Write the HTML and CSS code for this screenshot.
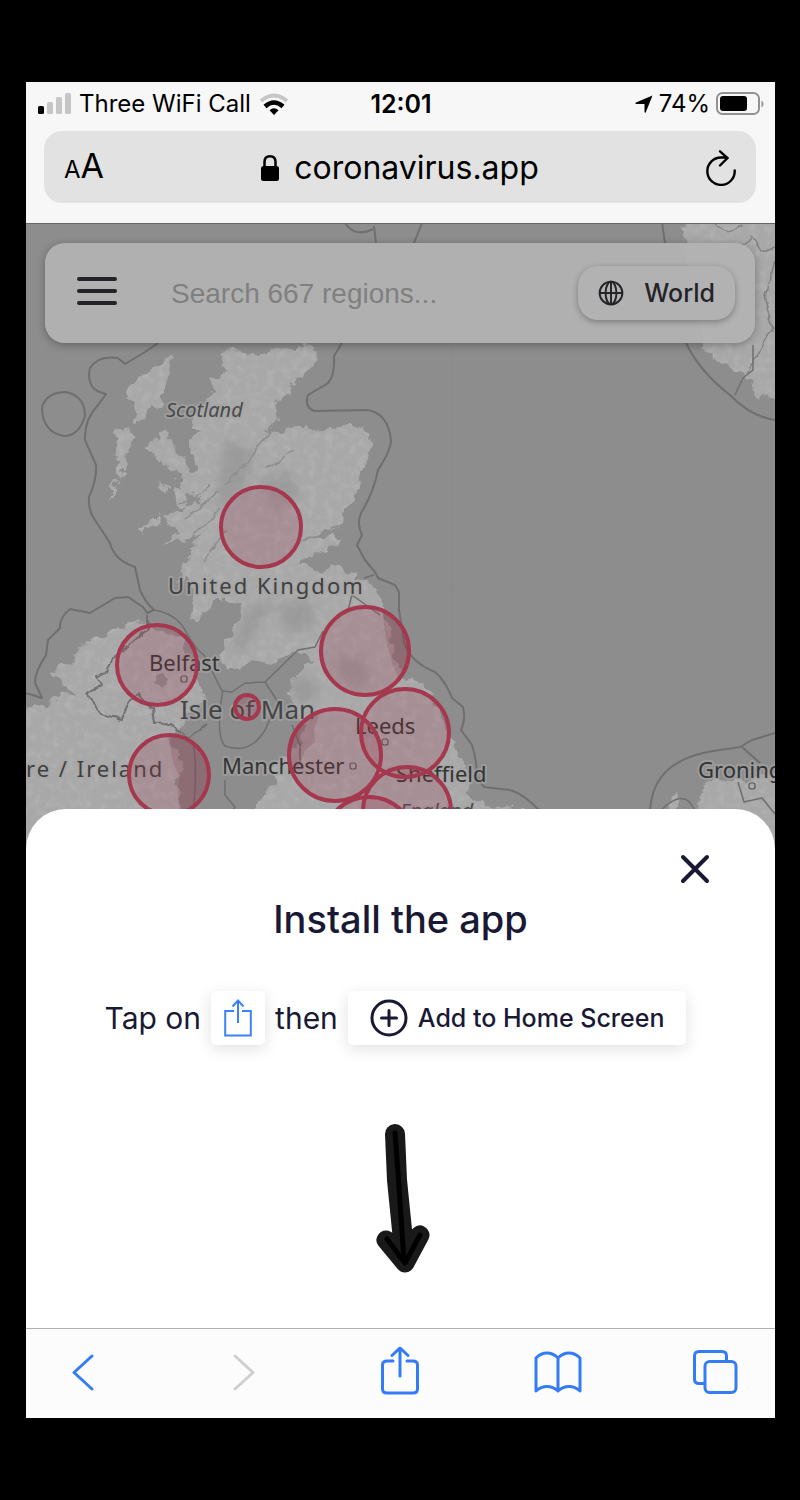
FILE: index.html
```html
<!DOCTYPE html>
<html lang="en">
<head>
<meta charset="utf-8">
<meta name="viewport" content="width=device-width, initial-scale=1">
<title>Install the app</title>
<link rel="stylesheet" href="styles.css">
</head>
<body>
<div class="phone">
  <header class="chrome">
    <div class="status">
      <div class="status-left">
        <svg class="signal" viewBox="0 0 33 21" aria-hidden="true">
          <rect x="0" y="13" width="6" height="8" rx="1.5"/>
          <g fill="#c6c6c6"><rect x="9" y="9" width="6" height="12" rx="1.5"/><rect x="18" y="4" width="6" height="17" rx="1.5"/><rect x="27" y="0" width="6" height="21" rx="1.5"/></g>
        </svg>
        <span>Three WiFi Call</span>
        <svg class="wifi" viewBox="0 0 30 22" aria-hidden="true">
          <path d="M2 8Q15-3 28 8" fill="none" stroke="#c6c6c6" stroke-width="4"/>
          <path d="M6 13.500Q15 5.500 24 13.500" fill="none" stroke="#000" stroke-width="4.500"/>
          <path d="M10.500 17.200Q15 13.500 19.500 17.200L15 22z"/>
        </svg>
      </div>
      <time class="clock">12:01</time>
      <div class="status-right">
        <svg class="location" viewBox="0 0 18 18" aria-hidden="true"><path d="M17.500.500L10.800 17.200Q10 18.500 9.500 17V9H1Q-.500 8.300 1 7.500z"/></svg>
        <span>74%</span>
        <svg class="battery" viewBox="0 0 48 24" aria-hidden="true">
          <rect x="1" y="1" width="42" height="21" rx="5.500" fill="none" stroke="#929292" stroke-width="2"/>
          <rect x="4" y="4" width="27" height="15" rx="3"/>
          <path d="M45.500 8.500Q47.500 9.500 47.500 12T45.500 15.500z" fill="#929292"/>
        </svg>
      </div>
    </div>
    <div class="address">
      <button class="plain text-size" type="button" aria-label="Text size"><span class="small-a">A</span><span class="big-a">A</span></button>
      <button class="plain site" type="button">
        <svg class="lock" viewBox="0 0 18 26" aria-hidden="true"><rect x="0" y="11" width="18" height="15" rx="2.500"/><path d="M3.500 12V7Q3.500 1.300 9 1.300T14.500 7v5" fill="none" stroke="#000" stroke-width="2.500"/></svg>
        <span>coronavirus.app</span>
      </button>
      <button class="plain reload" type="button" aria-label="Reload">
        <svg viewBox="0 0 30 36" aria-hidden="true"><path d="M28.700 20.500A13.700 13.700 0 1 1 15 7.500H21M14 1.300L21.500 8L14 15.500" fill="none" stroke="#000" stroke-width="2.400" stroke-linecap="round"/></svg>
      </button>
    </div>
  </header>

  <main class="content">
    <section class="stage" aria-label="Map of regions">
      <svg class="map" viewBox="26 224 749 626" preserveAspectRatio="xMidYMin slice">
        <defs>
          <filter id="coast" x="0" y="200" width="800" height="660" filterUnits="userSpaceOnUse">
            <feTurbulence type="fractalNoise" baseFrequency="0.09" numOctaves="3" seed="8" result="n"/>
            <feDisplacementMap in="SourceGraphic" in2="n" scale="14" xChannelSelector="R" yChannelSelector="G" result="land"/>
            <feTurbulence type="fractalNoise" baseFrequency="0.12" numOctaves="4" seed="3"/>
            <feColorMatrix values="0 0 0 0 .5  0 0 0 0 .5  0 0 0 0 .5  1.1 0 0 0 -.48"/>
            <feComposite in2="land" operator="in" result="hills"/>
            <feMerge><feMergeNode in="land"/><feMergeNode in="hills"/></feMerge>
          </filter>
          <filter id="rough" x="0" y="200" width="800" height="660" filterUnits="userSpaceOnUse">
            <feTurbulence type="fractalNoise" baseFrequency="0.08" numOctaves="2" seed="5"/>
            <feDisplacementMap in="SourceGraphic" scale="8" xChannelSelector="R" yChannelSelector="G"/>
          </filter>
          <filter id="soft" x="0" y="200" width="800" height="660" filterUnits="userSpaceOnUse"><feGaussianBlur stdDeviation="5"/></filter>
        </defs>
        <rect x="0" y="200" width="800" height="660" fill="#8d8d8d"/>
        <path d="M452 343V809M26 587H775" stroke="#8a8a8a" stroke-width="1"/>
        <g class="land" filter="url(#coast)">
          <path d="M228 347L240 354 262 354 285 347 315 345 316 360 310 372 295 380 285 395 272 405 281 417 270 430 264 437 290 427 305 425 320 430 350 427 368 432 374 445 364 467 360 485 354 500 343 512 342 525 325 530 300 545 331 533 337 544 320 554 300 562 320 572 332 564 348 573 370 585 382 600 388 625 395 655 402 676 425 685 435 705 452 740 458 755 468 770 470 800 500 807 540 812V860H236L250 815 262 797 278 782 270 768 290 752 300 745 303 725 290 705 292 680 310 660 298 650 270 665 255 661 240 668 229 672 218 655 235 630 240 605 228 600 215 600 200 620 192 621 195 600 186 573 175 585 168 598 190 555 202 535 163 545 180 532 165 520 185 505 202 500 180 490 196 465 189 440 200 430 190 425 205 400 216 388 209 378 223 375 220 355z"/>
          <path d="M165 427L172 440 178 455 191 472 186 482 170 470 163 462 147 450 150 437 160 440z"/>
          <path d="M170 357L174 367 165 385 165 402 150 407 140 421 133 422 137 410 130 400 131 382 145 375 155 365z"/>
          <path d="M112 433L130 425 132 440 125 460 123 478 116 475 118 450zM111 487L118 482 114 492 106 503zM161 482l9 3-3 7-8-3zM174 487l14 4-2 15-11-4zM150 522l10-8-3 10-12 6zM138 528l16-4-14 10z"/>
          <path d="M10 705L48 705 60 693 75 696 52 672 72 660 82 645 97 640 115 628 125 630 135 619 150 625 180 640 190 665 202 685 203 700 190 710 178 730 168 735 181 755 178 780 181 810 175 860H10z"/>
          <path d="M684 213H790V408L760 393 755 396 752 380 735 372 715 360 706 345 696 320 688 290z"/>
          <path d="M700 793L710 778 740 782 790 765V860H697zM668 805l8-16 5 10-6 10z"/>
        </g>
        <g filter="url(#soft)" fill="#8d8d8d" opacity=".5">
          <path d="M250 605L275 600 262 620 245 650 230 650zM275 605l35-5 5 25-25 10zM334 655l30 5 5 20-15 10-15-15zM288 683l18-8 14 12-8 15-15 3zM225 440l30 10-10 40-30 20zM260 480l30-10 10 25-25 15z"/>
        </g>
        <g filter="url(#rough)" fill="none" stroke="#8d8d8d" stroke-width="1.500">
          <path d="M282 410L250 460 225 485M300 543l45-20M185 520l35-30M190 540l30-30M205 560l20-30M180 505l30-20M265 470l30-20"/>
          <path stroke="#808080" d="M715 224l12 8 15-6M740 245l12-8 8 15 15-5M775 260l-10 40 8 30-18 28-8 15"/>
          <path d="M156 677l8-4 3 7-5 7-8-2z" fill="#8d8d8d"/>
        </g>
        <g class="border">
          <path d="M158 343L145 352 125 364 118 358Q98 355 90 368Q85 390 106 394L98 405Q84 420 85 440L96 465Q97 480 89 497Q88 511 95 520L110 543Q114 560 135 567L140 590Q145 602 154 610L147 613 143 607 128 597 115 598 90 613 70 609Q59 618 60 628L48 640 46 655Q32 677 36 685L42 698 26 693"/>
          <path d="M342 343L334 356Q335 380 325 385L308 395Q304 407 314 411L367 410Q388 413 391 440Q391 450 378 470Q374 490 364 508Q355 521 362 535L357 545 365 560 375 572 378 578 395 585 399 592 399 610 404 642Q410 662 435 672Q445 680 452 698L463 707Q466 720 461 730L472 745Q478 766 476 775L484 787 510 790Q524 794 540 811"/>
          <path d="M345 223Q355 238 373 229M374 226L376 243M422 223L414 243M662 223L665 243M686 343Q700 372 730 395Q750 416 775 420"/>
          <path d="M650 811Q651 790 662 776Q679 755 720 750L740 747 752 740 775 733M742 747l18 16"/>
          <path d="M42 407Q47 392 66 392Q85 396 85 416Q79 436 64 436Q42 432 42 407z"/>
        </g>
        <g class="border thin">
          <path d="M154 610Q175 613 185 630Q196 650 204 655L222 691 232 692 245 683 265 682 278 702M265 682l33-32 17-3 8-16M223 690Q215 735 225 746Q250 755 265 730L278 702M193 742q5 25 0 70M292 725l8 20v20M225 780v15l10 12-10 14M735 395l8-17 10-8V345M738 782l6 20 18-4 13 16"/>
          <path d="M364 578l10-3M380 615L352 595 348 610M660 811q25-25 35 0"/>
        </g>
        <g class="border" filter="url(#rough)">
          <path d="M149 613V628L112 660 107 674 96 676 100 686 86 694 96 705 100 714 122 719 130 699 138 694 152 709 154 724 170 723 189 739 207 724"/>
        </g>
        <g class="label">
          <text class="region" x="166" y="417">Scotland</text>
          <text class="country" x="168" y="594">United Kingdom</text>
          <text class="city" x="149" y="671">Belfast</text>
          <text class="island" x="180" y="719">Isle of Man</text>
          <text class="country" x="26" y="777">re / Ireland</text>
          <text class="city" x="222" y="774">Manchester</text>
          <text class="city" x="355" y="734">Leeds</text>
          <text class="city" x="396" y="782">Sheffield</text>
          <text class="region" x="400" y="818">England</text>
          <text class="city" x="698" y="778">Groning</text>
        </g>
        <g fill="none" stroke="#555" stroke-width="1.200">
          <rect x="181" y="676" width="6" height="6" rx="2"/><rect x="350" y="763" width="6" height="6" rx="2"/><rect x="382" y="739" width="6" height="6" rx="2"/><rect x="749" y="783" width="6" height="6" rx="2"/>
        </g>
        <g fill="#703848" fill-opacity=".2">
          <path d="M383 613Q405 625 409 651Q407 670 399 680Q385 650 383 613zM171 736Q206 742 208 775Q207 800 180 812Q176 790 180 777Q168 757 171 736zM290 755Q292 725 320 712L314 730 315 742 305 750 300 765 291 770z"/>
        </g>
        <g class="cases">
          <circle cx="261" cy="527" r="40"/><circle cx="365" cy="651" r="44"/><circle cx="157" cy="665" r="40"/>
          <circle cx="247" cy="707" r="12"/><circle cx="169" cy="775" r="40"/><circle cx="335" cy="755" r="46"/>
          <circle cx="405" cy="733" r="44"/><circle cx="407" cy="811" r="44"/><circle cx="369" cy="843" r="46"/>
        </g>
      </svg>
      <form class="search" role="search">
        <button class="plain menu" type="button" aria-label="Menu"><span></span><span></span><span></span></button>
        <input class="query" type="search" placeholder="Search 667 regions..." aria-label="Search regions">
        <button class="world" type="button">
          <svg viewBox="0 0 24 24" aria-hidden="true"><g fill="none" stroke="currentColor" stroke-width="1.800"><circle cx="12" cy="12" r="10.500"/><ellipse cx="12" cy="12" rx="5" ry="10.500"/><path d="M1.500 12H22.500M12 1.500V22.500"/></g></svg>
          <span>World</span>
        </button>
      </form>
    </section>

    <section class="sheet" aria-labelledby="sheet-title">
      <button class="plain close" type="button" aria-label="Close">
        <svg viewBox="0 0 34 34" aria-hidden="true"><path d="M5 5L29 29M29 5L5 29" stroke="currentColor" stroke-width="4" stroke-linecap="round"/></svg>
      </button>
      <h1 class="title" id="sheet-title">Install the app</h1>
      <p class="steps">
        <span>Tap on</span>
        <span class="tile share-tile">
          <svg viewBox="0 0 28 38" role="img" aria-label="Share"><path d="M10 12H1.200V36.500H26.800V12H18M14 24V2M8.500 7.500L14 1.500L19.500 7.500" fill="none" stroke="#3b82f6" stroke-width="2"/></svg>
        </span>
        <span>then</span>
        <span class="tile add-tile">
          <svg viewBox="0 0 38 38" aria-hidden="true"><g fill="none" stroke="currentColor" stroke-width="3"><circle cx="19" cy="19" r="17"/><path d="M19 11.500V26.500M11.500 19H26.500" stroke-linecap="round"/></g></svg>
          <span>Add to Home Screen</span>
        </span>
      </p>
      <svg class="arrow" viewBox="376 1124 54 149" aria-hidden="true">
        <g fill="none" stroke-linecap="round" stroke-linejoin="round">
          <path d="M395 1134L397 1180L403 1240" stroke="#191919" stroke-width="20"/>
          <path d="M386 1240L405 1263L420 1235L404 1250z" fill="#191919" stroke="#191919" stroke-width="19"/>
          <path d="M395 1133L398 1172L404 1261" stroke="#000" stroke-width="5"/>
          <path d="M387 1239L405 1263L420 1235" stroke="#000" stroke-width="5"/>
        </g>
      </svg>
    </section>
  </main>

  <nav class="toolbar" aria-label="Browser">
    <button class="plain" type="button" aria-label="Back"><svg viewBox="0 0 50 50"><path d="M34 9L16 25.500L34 42"/></svg></button>
    <button class="plain" type="button" aria-label="Forward" disabled><svg viewBox="0 0 50 50"><path d="M19 9L37 25.500L19 42"/></svg></button>
    <button class="plain" type="button" aria-label="Share"><svg viewBox="0 0 50 50"><path d="M18 14H12Q7.500 14 7.500 18V42Q7.500 46 12 46H38Q42.500 46 42.500 42V18Q42.500 14 38 14H32M25 29V1.500M17 8.500L25 1L33 8.500"/></svg></button>
    <button class="plain" type="button" aria-label="Bookmarks"><svg viewBox="0 0 50 50"><path d="M25 11Q20 6 14 6T3 11V44Q8 39.500 14 39.500T25 44ZM25 11Q30 6 36 6T47 11V44Q42 39.500 36 39.500T25 44"/></svg></button>
    <button class="plain" type="button" aria-label="Tabs"><svg viewBox="0 0 50 50"><path d="M13 36.500H8Q3.500 36.500 3.500 32V9Q3.500 4.500 8 4.500H31Q35.500 4.500 35.500 9V14"/><rect x="14" y="14.500" width="31" height="31" rx="4.500"/></svg></button>
  </nav>
</div>
</body>
</html>
```
FILE: styles.css
```css
* { box-sizing: border-box; }

body {
  margin: 0;
  padding: 82px 25px 82px 26px;
  background: #000;
  font-family: Inter, "Liberation Sans", sans-serif;
  color: #000;
}

.plain {
  display: flex;
  align-items: center;
  justify-content: center;
  padding: 0;
  border: 0;
  background: none;
  color: inherit;
  font: inherit;
}

.phone { display: flex; flex-direction: column; }

/* Browser chrome */
.chrome {
  padding-bottom: 20px;
  background: #f7f7f7;
  border-bottom: 1px solid #666;
}

.status {
  display: grid;
  grid-template-columns: 1fr auto 1fr;
  align-items: center;
  height: 49px;
  padding: 0 11px 6px 12px;
  font-size: 24px;
  line-height: 28px;
}
.status-left, .status-right { display: flex; align-items: center; }
.status-left { gap: 8px; }
.status-right { justify-content: flex-end; gap: 6px; }
.clock { font-size: 25px; font-weight: 600; }
.signal { width: 33px; height: 21px; }
.wifi { width: 30px; height: 22px; }
.location { width: 18px; height: 18px; }
.battery { width: 48px; height: 24px; }

.address {
  display: grid;
  grid-template-columns: 60px 1fr 60px;
  align-items: center;
  height: 72px;
  margin: 0 19px 0 18px;
  padding: 2px 20px 0 20px;
  border-radius: 18px;
  background: #e2e2e2;
}
.text-size { align-items: baseline; justify-content: flex-start; line-height: 40px; }
.small-a { font-size: 24px; }
.big-a { font-size: 34px; }
.site { gap: 15px; font-size: 32px; line-height: 40px; }
.lock { width: 18px; height: 26px; }
.reload { justify-content: flex-end; }
.reload svg { width: 30px; height: 36px; }

/* Map */
.stage {
  position: relative;
  height: 626px;
  padding: 19px 20px 0 19px;
  overflow: hidden;
  background: #8d8d8d;
}
.map { position: absolute; inset: 0; width: 100%; height: 100%; }
.land { fill: #a8a8a8; }
.border { fill: none; stroke: #6f6f6f; stroke-width: 2; stroke-linejoin: round; }
.thin { stroke-width: 1.500; }
.label {
  font-family: "Noto Sans", sans-serif;
  fill: #333;
  stroke: #a6a6a6;
  stroke-width: 4;
  stroke-opacity: .6;
  stroke-linejoin: round;
  paint-order: stroke;
}
.region { font-size: 20px; font-style: italic; fill: #4a4a4a; }
.country { font-size: 22px; letter-spacing: 2px; fill: #404040; }
.city { font-size: 22px; }
.island { font-size: 26px; fill: #444; }
.cases { fill: #a63a50; fill-opacity: .22; stroke: #a5384e; stroke-width: 4; }

.search {
  position: relative;
  display: flex;
  align-items: center;
  height: 100px;
  padding: 0 20px 0 32px;
  border-radius: 20px;
  background: rgba(178, 178, 178, .94);
  box-shadow: 0 2px 8px rgba(0, 0, 0, .3);
  color: #242428;
}
.menu { flex-direction: column; gap: 8px; width: 40px; padding-bottom: 4px; }
.menu span { width: 40px; height: 4px; border-radius: 2px; background: #242428; }
.query {
  flex: 1;
  min-width: 0;
  margin-left: 54px;
  padding: 2px 0 0;
  border: 0;
  background: none;
  font: 28px "Liberation Sans", sans-serif;
}
.query::placeholder { color: #808080; opacity: 1; }
.world {
  display: flex;
  align-items: center;
  justify-content: center;
  gap: 20px;
  height: 54px;
  padding: 0 20px;
  border: 0;
  border-radius: 20px;
  background: #b2b2b2;
  box-shadow: 0 2px 6px rgba(0, 0, 0, .3);
  color: #242428;
  font: 500 25px Inter, sans-serif;
}
.world svg { width: 26px; height: 26px; }

/* Install sheet */
.sheet {
  position: relative;
  display: flex;
  flex-direction: column;
  align-items: center;
  margin-top: -41px;
  padding: 40px 60px 55px;
  border-radius: 40px 40px 0 0;
  background: #fff;
  color: #191935;
}
.close { align-self: flex-end; width: 40px; height: 40px; }
.close svg { width: 34px; height: 34px; }
.title { margin: 5px 0 0; font-size: 38px; font-weight: 500; line-height: 50px; }
.steps {
  display: flex;
  align-items: center;
  justify-content: center;
  flex-wrap: wrap;
  gap: 10px;
  margin: 47px 10px 0 0;
  font-size: 30px;
  line-height: 36px;
}
.tile {
  display: flex;
  align-items: center;
  justify-content: center;
  gap: 10px;
  height: 54px;
  border-radius: 5px;
  background: #fff;
  box-shadow: 0 4px 16px rgba(0, 0, 0, .12);
}
.share-tile { width: 54px; }
.share-tile svg { width: 28px; height: 38px; }
.add-tile { padding: 0 22px; font-size: 25px; font-weight: 500; }
.add-tile svg { width: 38px; height: 38px; }
.arrow { width: 54px; height: 149px; margin: 79px 0 0 4px; }

/* Toolbar */
.toolbar {
  display: flex;
  align-items: center;
  justify-content: space-between;
  height: 90px;
  padding: 0 34px 3px 32px;
  border-top: 1px solid #b0b0b0;
  background: #fcfcfc;
  color: #347cf6;
}
.toolbar button:disabled { color: #cfcfcf; }
.toolbar svg {
  width: 50px;
  height: 50px;
  fill: none;
  stroke: currentColor;
  stroke-width: 3;
  stroke-linecap: round;
  stroke-linejoin: round;
}
```
